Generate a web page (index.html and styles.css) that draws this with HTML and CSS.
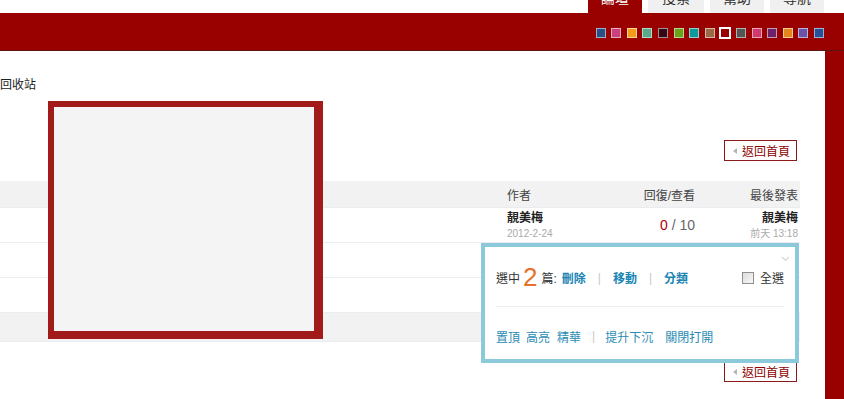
FILE: index.html
```html
<!DOCTYPE html>
<html lang="zh-Hant">
<head>
    <meta charset="UTF-8">
    <meta name="viewport" content="width=device-width, initial-scale=1.0">
    <title>回收站</title>
    <link rel="stylesheet" href="styles.css">
</head>
<body>
    <div class="top">
        <ul class="tabs">
            <li class="tab active">論壇</li>
            <li class="tab">搜索</li>
            <li class="tab">幫助</li>
            <li class="tab">導航</li>
        </ul>
    </div>
    <div class="band">
        <ul class="skins">
            <li class="skin" style="background:#2a4f86"></li>
            <li class="skin" style="background:#c8407e"></li>
            <li class="skin" style="background:#f39b1b"></li>
            <li class="skin" style="background:#5aa98a"></li>
            <li class="skin" style="background:#330915"></li>
            <li class="skin" style="background:#6aa31a"></li>
            <li class="skin" style="background:#0e9a9c"></li>
            <li class="skin" style="background:#9a6a46"></li>
            <li class="skin current"></li>
            <li class="skin" style="background:#555555"></li>
            <li class="skin" style="background:#d0396e"></li>
            <li class="skin" style="background:#6d2269"></li>
            <li class="skin" style="background:#e1871c"></li>
            <li class="skin" style="background:#6a54a8"></li>
            <li class="skin" style="background:#275196"></li>
        </ul>
    </div>

    <div class="wrap">
        <div class="content">
            <div class="crumb">回收站</div>

            <div class="pager">
                <a class="back">返回首頁</a>
            </div>

            <div class="threads">
                <div class="row head">
                    <div class="cell"></div>
                    <div class="cell">作者</div>
                    <div class="cell num">回復/查看</div>
                    <div class="cell last">最後發表</div>
                </div>
                <div class="row">
                    <div class="cell"></div>
                    <div class="cell">
                        <div class="name">靚美梅</div>
                        <div class="date">2012-2-24</div>
                    </div>
                    <div class="cell num count-cell"><span class="reply">0</span> / 10</div>
                    <div class="cell last">
                        <div class="name">靚美梅</div>
                        <div class="date">前天 13:18</div>
                    </div>
                </div>
                <div class="row"></div>
                <div class="row"></div>
                <div class="row foot"></div>
            </div>

            <div class="pager bottom">
                <a class="back">返回首頁</a>
            </div>

            <!-- 拖動中的帖子佔位 -->
            <div class="drag-box"></div>

            <!-- 批量管理浮層 -->
            <div class="mod-panel">
                <svg class="fold" width="9" height="6" viewBox="0 0 9 6"><path d="M1 1 L4.5 4.5 L8 1" fill="none" stroke="#d6d6d6" stroke-width="1.2"/></svg>
                <div class="mod-line">
                    <span class="count">選中<em>2</em>篇:</span>
                    <a class="op">刪除</a>
                    <span class="sep">|</span>
                    <a class="op">移動</a>
                    <span class="sep">|</span>
                    <a class="op">分類</a>
                    <label class="all"><span class="check"></span>全選</label>
                </div>
                <div class="mod-line second">
                    <a class="op2">置頂</a>
                    <a class="op2">高亮</a>
                    <a class="op2 gap">精華</a>
                    <span class="sep">|</span>
                    <a class="op2">提升下沉</a>
                    <a class="op2 wide">關閉打開</a>
                </div>
            </div>
        </div>
        <div class="side"></div>
    </div>
</body>
</html>
```

FILE: styles.css
```css
* {
    box-sizing: border-box;
}
body {
    margin: 0;
    font-family: "Liberation Sans", "Noto Sans CJK TC", sans-serif;
    font-size: 12px;
    color: #333;
    background: #fff;
    overflow: hidden;
}
ul {
    margin: 0;
    padding: 0;
    list-style: none;
}
a {
    cursor: pointer;
}
.top {
    height: 13px;
    overflow: hidden;
}
.tabs {
    display: flex;
    justify-content: flex-end;
    gap: 6px;
    padding-right: 20px;
    margin-top: -13px;
}
.tab {
    width: 54px;
    height: 26px;
    line-height: 22px;
    font-size: 14px;
    text-align: center;
    background: #f0f0f0;
    color: #333;
}
.tab:nth-child(2) {
    width: 56px;
}
.tab.active {
    background: #990000;
    color: #fff;
}
.band {
    height: 38px;
    background: #990000;
    border-bottom: 1px solid #5c1414;
    display: flex;
    justify-content: flex-end;
    padding: 15px 20px 0 0;
}
.skins {
    display: flex;
    align-items: center;
    gap: 5.6px;
    height: 10px;
}
.skin {
    width: 10px;
    height: 10px;
    border: 1px solid rgba(255, 255, 255, .55);
}
.skin.current {
    width: 12px;
    height: 12px;
    margin: 0 -1px;
    border: 2px solid #fff;
    background: #990000;
}
.wrap {
    display: flex;
    height: 349px;
}
.content {
    flex: 1;
    position: relative;
    padding-right: 25px;
}
.side {
    width: 19px;
    background: #990000;
}
.crumb {
    margin-top: 26px;
    height: 17px;
    line-height: 17px;
    color: #222;
}
.pager {
    display: flex;
    justify-content: flex-end;
    padding-right: 3px;
    margin-top: 46px;
}
.pager.bottom {
    margin-top: 19px;
}
.back {
    display: flex;
    align-items: center;
    width: 73px;
    height: 21px;
    padding-left: 8px;
    border: 1px solid #8b1a1a;
    color: #8b0000;
    font-size: 12px;
}
.back::before {
    content: '';
    width: 0;
    height: 0;
    border-top: 3px solid transparent;
    border-bottom: 3px solid transparent;
    border-right: 4px solid #b5b5b5;
    margin-right: 5px;
}
.threads {
    margin-top: 20px;
}
.row {
    display: grid;
    grid-template-columns: 507px 120px 70px 1fr;
    height: 35px;
    border-bottom: 1px solid #e9edef;
}
.row.head {
    height: 27px;
    background: #f2f2f2;
    align-items: center;
    font-size: 12px;
    color: #444;
}
.row.foot {
    height: 29px;
    background: #f2f2f2;
}
.cell.num,
.cell.last {
    text-align: right;
    padding-right: 2px;
}
.row .name {
    margin-top: 2px;
    font-weight: bold;
    font-size: 12px;
    color: #222;
    line-height: 17px;
}
.row .date {
    font-size: 10px;
    color: #aaa;
    line-height: 14px;
}
.count-cell {
    line-height: 35px;
    font-size: 14px;
    color: #666;
}
.reply {
    color: #b00000;
}
.drag-box {
    position: absolute;
    left: 48px;
    top: 50px;
    width: 275px;
    height: 238px;
    background: #f4f4f4;
    border-style: solid;
    border-color: #a11b1b;
    border-width: 6px 9px 8px 6px;
}
.mod-panel {
    position: absolute;
    left: 481px;
    top: 192px;
    width: 318px;
    height: 120px;
    background: #fff;
    border: 4px solid #8ccadb;
    padding: 0 11px;
}
.fold {
    position: absolute;
    right: 5px;
    top: 9px;
}
.mod-line {
    display: flex;
    align-items: center;
    height: 60px;
    padding-top: 2px;
    border-bottom: 1px solid #ececec;
    font-size: 12px;
}
.mod-line.second {
    height: 55px;
    padding-top: 3px;
    border-bottom: 0;
}
.count {
    color: #333;
}
.count em {
    font-style: normal;
    font-size: 26px;
    color: #e8712a;
    font-family: "Liberation Sans", sans-serif;
    vertical-align: -3px;
    margin: 0 4px 0 3px;
}
.op {
    color: #1a85b3;
    font-weight: bold;
    margin-left: 5px;
}
.sep {
    color: #c8c8c8;
    margin: 0 12px;
}
.sep + .op {
    margin-left: 0;
}
.second .sep {
    margin: 0 10px 0 9px;
}
.all {
    margin-left: auto;
    display: flex;
    align-items: center;
    color: #333;
}
.check {
    width: 12px;
    height: 12px;
    border: 1px solid #8f8f8f;
    background: linear-gradient(135deg, #dcdcdc, #f8f8f8);
    margin-right: 6px;
}
.op2 {
    color: #2a8cb5;
    margin-right: 6px;
}
.op2.gap {
    margin-left: 1px;
    margin-right: 2px;
}
.op2.wide {
    margin-left: 6px;
}
```
